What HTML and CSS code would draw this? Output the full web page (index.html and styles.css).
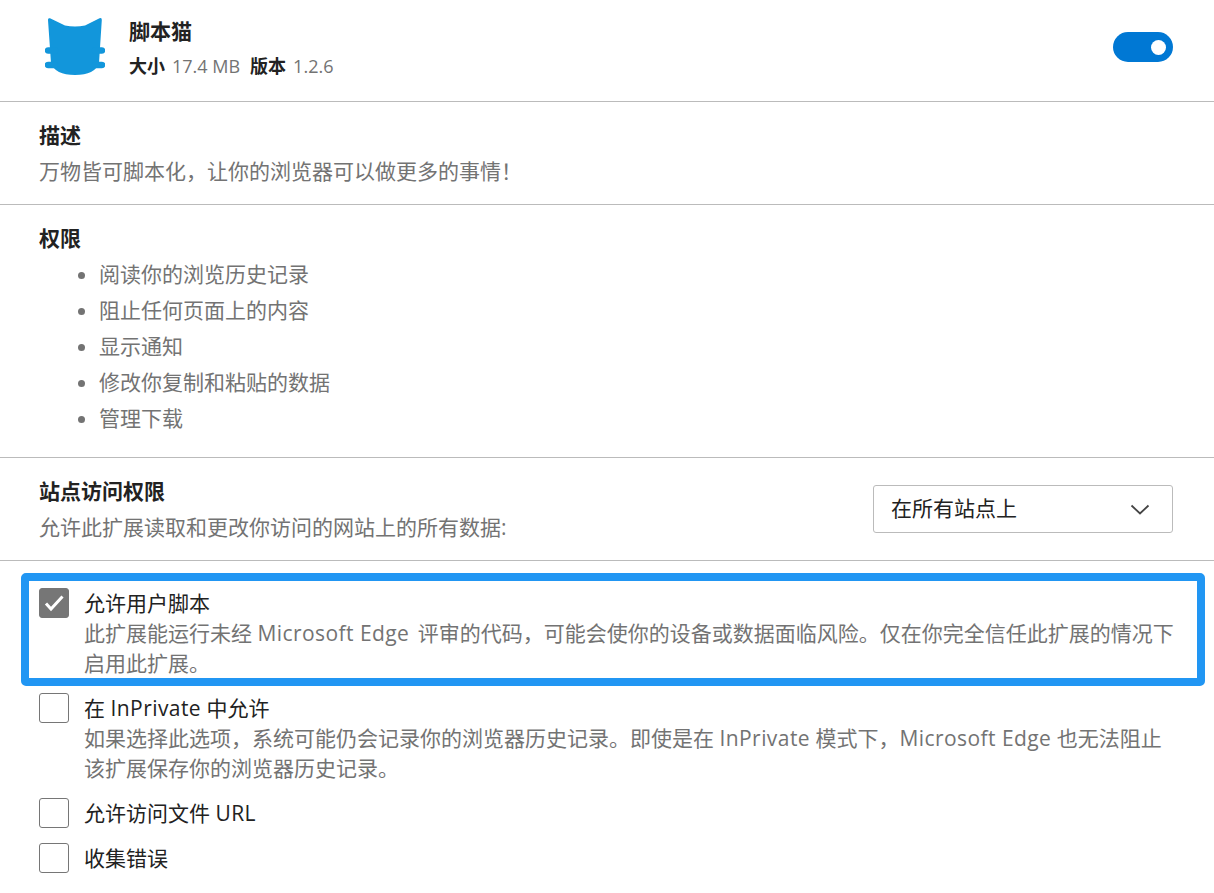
FILE: index.html
```html
<!DOCTYPE html>
<html lang="zh-CN">
<head>
<meta charset="utf-8">
<title>脚本猫</title>
<link rel="stylesheet" href="styles.css">
</head>
<body>
<main class="page">
  <header class="section head">
    <svg class="logo" viewBox="0 0 60 60" aria-hidden="true">
      <path class="logo-fill" d="M3 3Q2.8 .6 5 1.300L20 8.500Q30 10.500 40 8.500L54.500 1.300Q57 .5 56.800 3L54 46Q50 58 30 58Q10 58 6 46Z"/>
      <path class="logo-line" d="M3 33.500H10M3 47.900H10M50 33.500H57M50 47.900H57"/>
    </svg>
    <div class="head-text">
      <div class="title">脚本猫</div>
      <div class="meta"><b>大小</b><span class="muted size">17.4 MB</span><b class="meta-gap">版本</b><span class="muted size">1.2.6</span></div>
    </div>
    <div class="toggle"><span class="knob"></span></div>
  </header>

  <section class="section block">
    <h2>描述</h2>
    <p class="muted">万物皆可脚本化，让你的浏览器可以做更多的事情！</p>
  </section>

  <section class="section block perms">
    <h2>权限</h2>
    <ul class="muted">
      <li>阅读你的浏览历史记录</li>
      <li>阻止任何页面上的内容</li>
      <li>显示通知</li>
      <li>修改你复制和粘贴的数据</li>
      <li>管理下载</li>
    </ul>
  </section>

  <section class="section block site">
    <div>
      <h2>站点访问权限</h2>
      <p class="muted">允许此扩展读取和更改你访问的网站上的所有数据:</p>
    </div>
    <div class="select">
      <span>在所有站点上</span>
      <svg class="chev" viewBox="0 0 20 11" aria-hidden="true"><path d="M1.500 1.500L10 9.500L18.500 1.500"/></svg>
    </div>
  </section>

  <section class="options">
    <div class="highlight">
      <div class="opt">
        <span class="box checked"><svg viewBox="0 0 30 30" aria-hidden="true"><path d="M7 15.500L12 21L23.500 8.500"/></svg></span>
        <div class="opt-text">
          <div>允许用户脚本</div>
          <div class="muted">此扩展能运行未经 <span class="lat lat-gap">Microsoft Edge</span> 评审的代码，可能会使你的设备或数据面临风险。仅在你完全信任此扩展的情况下启用此扩展。</div>
        </div>
      </div>
    </div>
    <div class="opt private">
      <span class="box"></span>
      <div class="opt-text">
        <div>在 <span class="lat">InPrivate</span> 中允许</div>
        <div class="muted">如果选择此选项，系统可能仍会记录你的浏览器历史记录。即使是在 <span class="lat">InPrivate</span> 模式下，<span class="lat">Microsoft Edge</span> 也无法阻止该扩展保存你的浏览器历史记录。</div>
      </div>
    </div>
    <div class="opt spaced">
      <span class="box"></span>
      <div class="opt-text"><div>允许访问文件 <span class="lat">URL</span></div></div>
    </div>
    <div class="opt spaced">
      <span class="box"></span>
      <div class="opt-text"><div>收集错误</div></div>
    </div>
  </section>
</main>
</body>
</html>
```
FILE: styles.css
```css
* { box-sizing: border-box; }
html, body { margin: 0; padding: 0; background: #fff; }
body {
  height: 893px;
  overflow: hidden;
  color: #222;
  font-family: "Open Sans", "Noto Sans CJK SC", sans-serif;
  font-size: 21px;
  line-height: 36px;
}
.section { border-bottom: 1px solid #bbb; }
.muted { color: #737373; }
.lat { letter-spacing: 0.43px; }
.lat-gap { margin-right: 3px; }
h2 { margin: 0; font-size: 21px; font-weight: 600; line-height: 36px; }
p { margin: 0; }

.head { height: 102px; display: flex; align-items: flex-start; padding: 0 41px 0 45px; }
.logo { width: 60px; height: 60px; margin-top: 17px; flex: none; }
.logo-fill { fill: #1296db; }
.logo-line { fill: none; stroke: #1296db; stroke-width: 6.500; stroke-linecap: round; }
.head-text { margin-left: 24px; padding-top: 13px; flex: 1; }
.title { font-weight: 600; line-height: 36px; }
.meta { display: flex; font-size: 18px; line-height: 32px; margin-top: 1px; }
.meta b { font-weight: 600; }
.size { margin-left: 7px; }
.meta-gap { margin-left: 10px; }
.toggle {
  width: 60px; height: 30px; margin-top: 32px;
  display: flex; align-items: center; justify-content: flex-end;
  padding-right: 7.500px;
  background: #0078d4; border-radius: 15px;
}
.knob { width: 15px; height: 15px; border-radius: 50%; background: #fff; }

.block { padding: 15px 41px 15px 39px; }
.perms { padding-bottom: 21px; }
ul { margin: 0; padding: 0 0 0 60px; }
li { line-height: 36px; }
.site { display: flex; justify-content: space-between; align-items: center; }
.select {
  width: 300px; height: 48px;
  display: flex; align-items: center; justify-content: space-between;
  padding: 0 22px 2px 17px;
  border: 1px solid #bbb; border-radius: 3px;
  line-height: 30px;
}
.chev { width: 20px; height: 11px; fill: none; margin-top: 2px; }
.chev path { stroke: #444; stroke-width: 1.800; fill: none; }

.options { padding: 12px 41px 0 39px; }
.highlight {
  margin: 0 -32px 0 -18px;
  padding: 7px 20px 0 10px;
  border: 8px solid #2196f3;
  border-radius: 5px;
}
.opt { display: flex; line-height: 30px; }
.opt-text { margin-left: 15px; flex: 1; min-width: 0; }
.box {
  width: 30px; height: 30px; flex: none;
  border: 1px solid #767676; border-radius: 3px; background: #fff;
}
.box svg { display: block; width: 30px; height: 30px; margin: -1px; fill: none; }
.box path { stroke: #fff; stroke-width: 3; fill: none; }
.box.checked { background: #767676; }
.private { margin-top: 7px; }
.spaced { margin-top: 15px; }
```
